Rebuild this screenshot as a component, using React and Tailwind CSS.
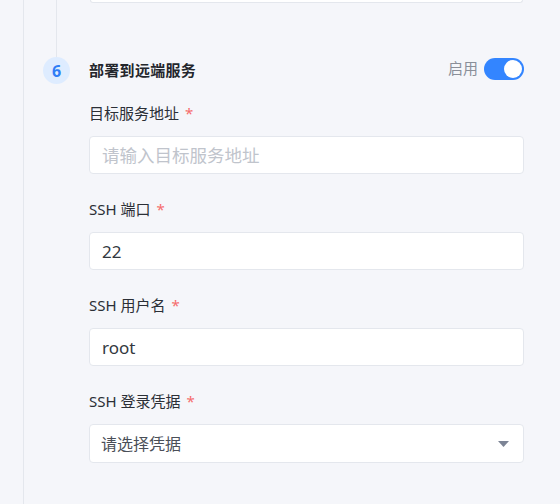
import React, { useState } from "react";

const fields = [
  { label: "目标服务地址", value: "", placeholder: "请输入目标服务地址" },
  { label: "SSH 端口", value: "22" },
  { label: "SSH 用户名", value: "root" },
];

function Label({ children }) {
  return (
    <div className="h-[20px] leading-[20px] text-[15px] text-[#2b2f36]">
      {children}
      <span className="ml-[6px] text-[#f56c6c]">*</span>
    </div>
  );
}

export default function App() {
  const [enabled, setEnabled] = useState(true);

  return (
    <div
      className="w-[560px] h-[504px] bg-[#f5f6fa] overflow-hidden"
      style={{ fontFamily: '"Noto Sans", "Noto Sans CJK SC", sans-serif' }}
    >
      <div className="ml-[23px] h-full border-l border-[#e4e7ed] flex">
        {/* step indicator */}
        <div className="w-[65px] flex flex-col items-center">
          <div className="w-px h-[57px] bg-[#e4e7ed]" />
          <div className="w-[27px] h-[27px] rounded-full bg-[#deecff] text-[#2f7df6] font-bold text-[16px] flex items-center justify-center">
            6
          </div>
        </div>

        <div className="w-[435px]">
          {/* previous card edge */}
          <div className="mx-px h-[3px] bg-white border border-t-0 border-[#e4e7ed] rounded-b-[4px]" />

          <div className="mt-[54px] h-[27px] flex items-center justify-between">
            <span className="text-[15px] font-bold text-[#23262c] tracking-[0.3px]">部署到远端服务</span>
            <div className="flex items-center gap-[6px] -mt-[4px]">
              <span className="text-[15px] text-[#8a8f99]">启用</span>
              <button
                type="button"
                onClick={() => setEnabled(!enabled)}
                className={
                  "w-[40px] h-[22px] rounded-full flex items-center px-[2px] " +
                  (enabled ? "bg-[#3385ff] justify-end" : "bg-[#c8ccd4] justify-start")
                }
              >
                <span className="w-[18px] h-[18px] rounded-full bg-white" />
              </button>
            </div>
          </div>

          <div className="mt-[19px]">
            {fields.map((f) => (
              <div key={f.label} className="mb-[25px]">
                <Label>{f.label}</Label>
                <input
                  readOnly
                  value={f.value}
                  placeholder={f.placeholder}
                  className={
                    "mt-[13px] w-full h-[38px] bg-white border border-[#e4e7ed] rounded-[4px] px-[12px] outline-none text-[#333840] placeholder:text-[#c0c4cc] " +
                    (f.value ? "text-[17px]" : "text-[17.5px]")
                  }
                />
              </div>
            ))}

            <div>
              <Label>SSH 登录凭据</Label>
              <div className="mt-[13px] w-full h-[39px] bg-white border border-[#e4e7ed] rounded-[4px] pl-[11px] pr-[14px] flex items-center justify-between">
                <span className="text-[16px] text-[#4a4f58]">请选择凭据</span>
                <svg width="11" height="6" viewBox="0 0 11 6">
                  <path d="M0 0 H11 L5.5 6 Z" fill="#7c8495" />
                </svg>
              </div>
            </div>
          </div>
        </div>
      </div>
    </div>
  );
}
